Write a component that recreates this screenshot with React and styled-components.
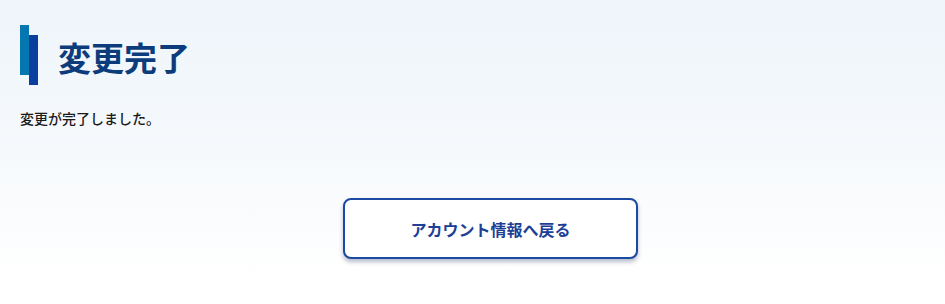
import React from 'react';
import styled, { createGlobalStyle } from 'styled-components';

const GlobalStyle = createGlobalStyle`
  html, body {
    margin: 0;
    padding: 0;
  }
  body {
    font-family: "Noto Sans CJK JP", "Noto Sans", sans-serif;
    background: #ffffff;
  }
`;

//Page wrapper with soft gradient
const Page = styled.main`
  box-sizing: border-box;
  width: 100%;
  height: 304px;
  padding: 25px 20px 0 20px;
  background: linear-gradient(180deg, #eef5fa 0%, #f6f9fc 50%, #ffffff 92%);
`;

const TitleRow = styled.div`
  display: flex;
  align-items: center;
  gap: 20px;
  height: 60px;
`;

const Marker = styled.div`
  display: flex;
  align-items: flex-start;
  height: 60px;
`;

const Bar = styled.span`
  display: block;
  width: 9px;
  height: 50px;
  margin-top: ${(p) => p.offset || 0}px;
  background-color: ${(p) => p.color};
`;

const Title = styled.h1`
  margin: 0;
  font-size: 33px;
  font-weight: 700;
  line-height: 1;
  color: #0d3c7c;
  position: relative;
  top: 2px;
`;

const Message = styled.p`
  margin: 23px 0 0 0;
  font-size: 14px;
  font-weight: 500;
  line-height: 20px;
  color: #1a1a1a;
`;

const ButtonRow = styled.div`
  display: flex;
  justify-content: center;
  padding-left: 36px;
  margin-top: 70px;
`;

const BackButton = styled.button`
  box-sizing: border-box;
  width: 295px;
  height: 61px;
  background-color: #ffffff;
  border: 2px solid #1c4aa2;
  border-radius: 8px;
  box-shadow: 0 3px 4px rgba(20, 40, 90, 0.3);
  color: #1d3f95;
  font-family: "Noto Sans CJK JP", "Noto Sans", sans-serif;
  font-size: 16px;
  font-weight: 700;
  cursor: pointer;
`;

function App() {
  return (
    <>
      <GlobalStyle />
      <Page>
        <TitleRow>
          <Marker>
            <Bar color="#0477b0" />
            <Bar color="#0b3f9f" offset={10} />
          </Marker>
          <Title>変更完了</Title>
        </TitleRow>
        <Message>変更が完了しました。</Message>
        <ButtonRow>
          <BackButton>アカウント情報へ戻る</BackButton>
        </ButtonRow>
      </Page>
    </>
  );
}

export default App;
